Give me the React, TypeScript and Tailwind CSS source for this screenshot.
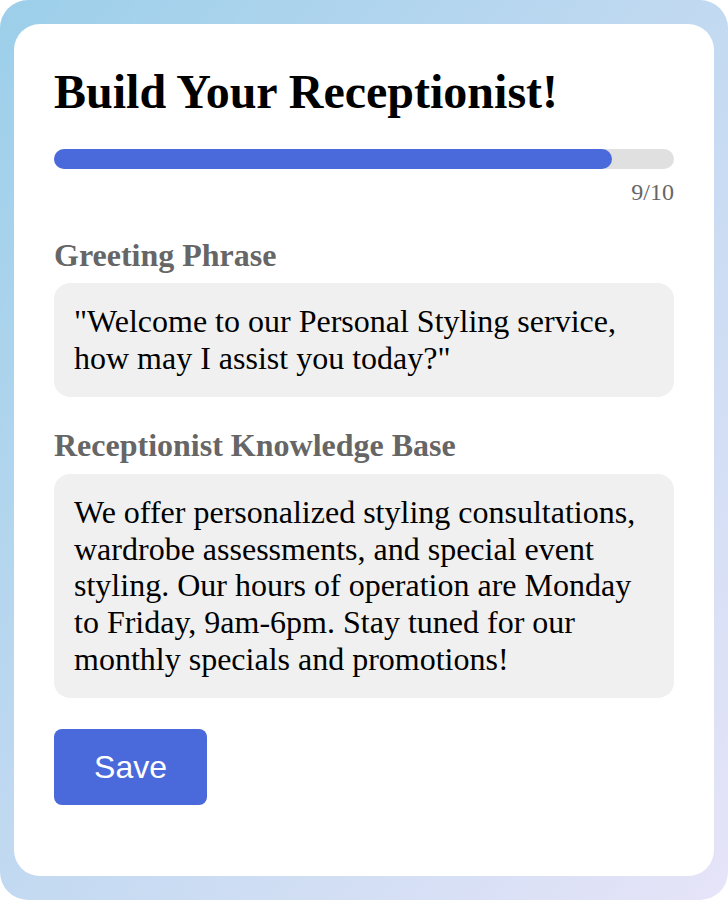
import React from "react";

export default function App() {
  return (
    <div className="w-[728px] h-[900px] rounded-[28px] bg-gradient-to-br from-[#9ccfea] to-[#e6e4f8] px-[14px] py-[24px]" style={{ fontFamily: '"Liberation Serif", "Times New Roman", serif' }}>
      <div className="h-full rounded-[26px] bg-white px-[40px] pt-[40px]">
        <h1 className="text-[48px] font-bold leading-[55px] text-black">Build Your Receptionist!</h1>
        <div className="mt-[30px] h-[20px] w-full rounded-full bg-[#e0e0e0]">
          <div className="h-full rounded-full bg-[#4a69db]" style={{ width: "90%" }} />
        </div>
        <div className="mt-[10px] text-right text-[24px] leading-[27.6px] text-[#666]">9/10</div>
        <div className="mt-[30px] text-[32px] font-bold leading-[36.8px] text-[#666]">Greeting Phrase</div>
        <div className="mt-[10px] rounded-[16px] bg-[#f0f0f0] px-[20px] py-[20px] text-[32px] leading-[36.8px] text-black">
          "Welcome to our Personal Styling service, how may I assist you today?"
        </div>
        <div className="mt-[30px] text-[32px] font-bold leading-[36.8px] text-[#666]">Receptionist Knowledge Base</div>
        <div className="mt-[10px] rounded-[16px] bg-[#f0f0f0] px-[20px] py-[20px] text-[32px] leading-[36.8px] text-black">
          We offer personalized styling consultations, wardrobe assessments, and special event styling. Our hours of operation are Monday to Friday, 9am-6pm. Stay tuned for our monthly specials and promotions!
        </div>
        <button className="mt-[31px] h-[76px] w-[153px] rounded-[8px] bg-[#4a69db] text-[32px] leading-none text-white" style={{ fontFamily: '"Liberation Sans", Arial, sans-serif' }}>
          Save
        </button>
      </div>
    </div>
  );
}
